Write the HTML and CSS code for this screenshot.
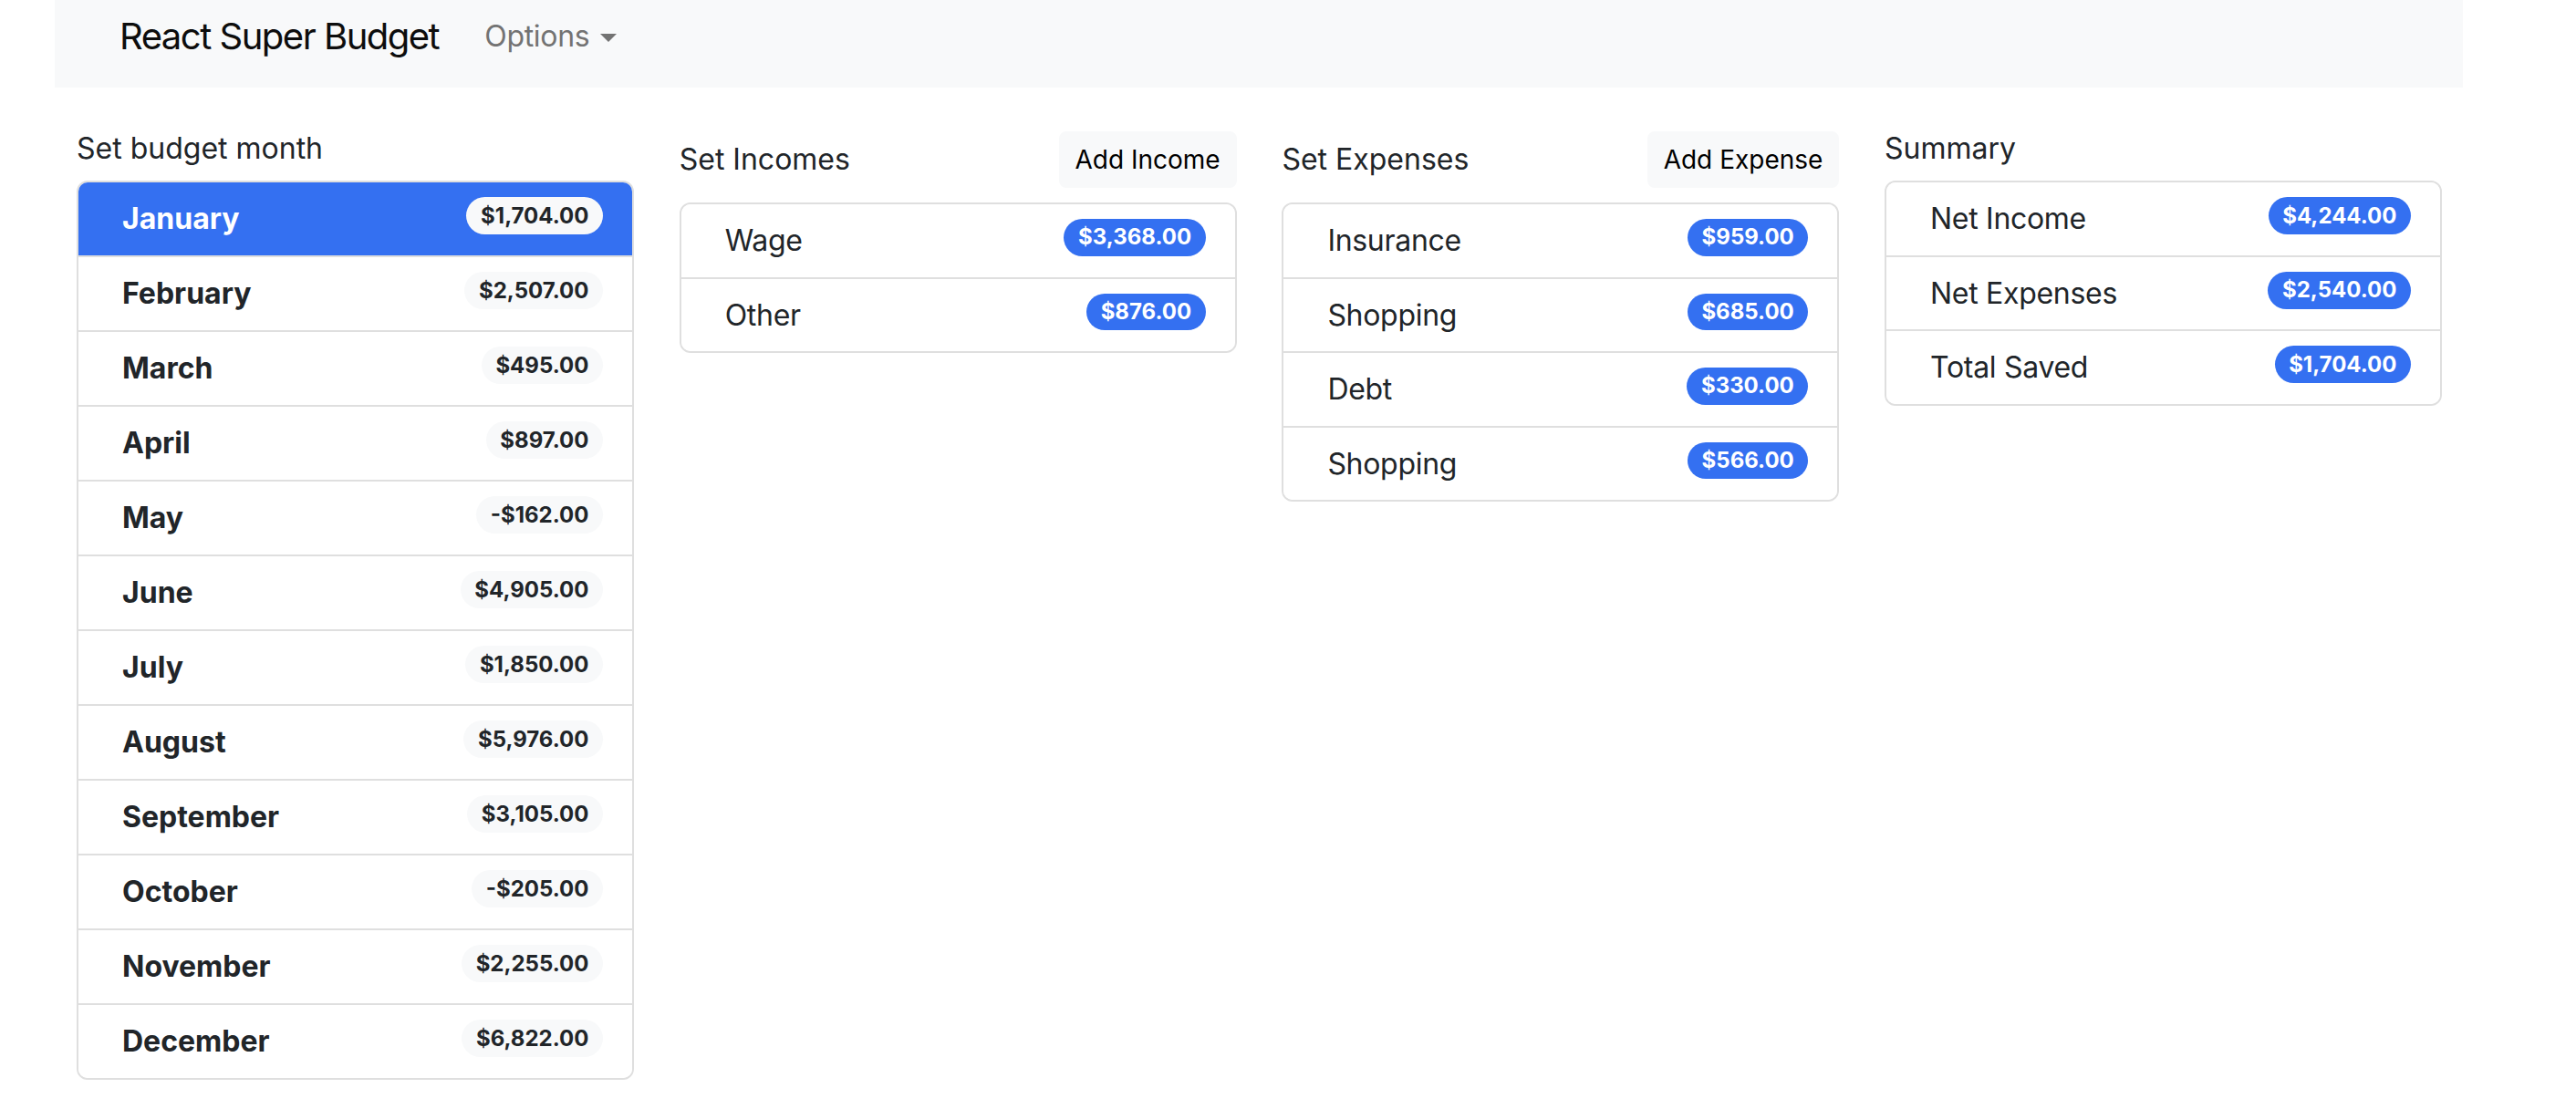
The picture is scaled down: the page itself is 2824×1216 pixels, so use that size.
FILE: index.html
```html
<!DOCTYPE html>
<html lang="en">
<head>
<meta charset="utf-8">
<title>React Super Budget</title>
<link rel="stylesheet" href="styles.css">
</head>
<body>
<nav class="navbar">
  <span class="brand">React Super Budget</span>
  <span class="nav-options">Options<svg class="caret" width="18" height="9" viewBox="0 0 18 9"><path d="M0 0 H18 L9 9 Z" fill="#737373"/></svg></span>
</nav>
<main class="main">
  <section class="col">
    <h2 class="heading">Set budget month</h2>
    <ul class="list">
      <li class="item active"><span class="label bold">January</span><span class="badge light">$1,704.00</span></li>
      <li class="item"><span class="label bold">February</span><span class="badge light">$2,507.00</span></li>
      <li class="item"><span class="label bold">March</span><span class="badge light">$495.00</span></li>
      <li class="item"><span class="label bold">April</span><span class="badge light">$897.00</span></li>
      <li class="item"><span class="label bold">May</span><span class="badge light">-$162.00</span></li>
      <li class="item"><span class="label bold">June</span><span class="badge light">$4,905.00</span></li>
      <li class="item"><span class="label bold">July</span><span class="badge light">$1,850.00</span></li>
      <li class="item"><span class="label bold">August</span><span class="badge light">$5,976.00</span></li>
      <li class="item"><span class="label bold">September</span><span class="badge light">$3,105.00</span></li>
      <li class="item"><span class="label bold">October</span><span class="badge light">-$205.00</span></li>
      <li class="item"><span class="label bold">November</span><span class="badge light">$2,255.00</span></li>
      <li class="item"><span class="label bold">December</span><span class="badge light">$6,822.00</span></li>
    </ul>
  </section>
  <section class="col">
    <div class="head-row">
      <h2 class="heading inline">Set Incomes</h2>
      <button class="btn">Add Income</button>
    </div>
    <ul class="list compact">
      <li class="item"><span class="label">Wage</span><span class="badge primary">$3,368.00</span></li>
      <li class="item"><span class="label">Other</span><span class="badge primary">$876.00</span></li>
    </ul>
  </section>
  <section class="col">
    <div class="head-row">
      <h2 class="heading inline">Set Expenses</h2>
      <button class="btn">Add Expense</button>
    </div>
    <ul class="list compact">
      <li class="item"><span class="label">Insurance</span><span class="badge primary">$959.00</span></li>
      <li class="item"><span class="label">Shopping</span><span class="badge primary">$685.00</span></li>
      <li class="item"><span class="label">Debt</span><span class="badge primary">$330.00</span></li>
      <li class="item"><span class="label">Shopping</span><span class="badge primary">$566.00</span></li>
    </ul>
  </section>
  <section class="col">
    <h2 class="heading">Summary</h2>
    <ul class="list compact">
      <li class="item"><span class="label">Net Income</span><span class="badge primary">$4,244.00</span></li>
      <li class="item"><span class="label">Net Expenses</span><span class="badge primary">$2,540.00</span></li>
      <li class="item"><span class="label">Total Saved</span><span class="badge primary">$1,704.00</span></li>
    </ul>
  </section>
</main>
</body>
</html>
```
FILE: styles.css
```css
* { box-sizing: border-box; }
html, body {
  margin: 0;
  padding: 0;
  background: #ffffff;
}
body {
  font-family: Inter, "Liberation Sans", Arial, sans-serif;
  color: #212529;
  font-size: 32px;
  line-height: 48px;
  width: 2824px;
  min-height: 1216px;
}
.navbar {
  margin-left: 60px;
  width: 2640px;
  height: 96px;
  background: #f8f9fa;
  display: flex;
  align-items: flex-start;
  padding: 16px 0 0 71px;
}
.brand {
  font-size: 40px;
  line-height: 48px;
  color: #0d0d0d;
  letter-spacing: -1.5px;
  margin-right: 50px;
}
.nav-options {
  font-size: 32px;
  line-height: 48px;
  color: #737373;
  letter-spacing: -0.3px;
  display: flex;
  align-items: center;
}
.caret {
  margin-left: 12px;
  margin-top: 2px;
}
.main {
  display: grid;
  grid-template-columns: repeat(4, 611px);
  column-gap: 49.7px;
  align-items: start;
  padding: 48px 0 0 84px;
}
.col {
  display: flex;
  flex-direction: column;
}
.heading {
  margin: 0 0 16px 0;
  font-size: 32px;
  font-weight: 400;
  line-height: 38.4px;
}
.heading.inline { margin: 0; }
.head-row {
  display: flex;
  justify-content: space-between;
  align-items: center;
  margin-bottom: 16px;
}
.btn {
  font-family: inherit;
  font-size: 28px;
  line-height: 42px;
  padding: 8px 16px;
  color: #000;
  background: #f8f9fa;
  border: 2px solid #f8f9fa;
  border-radius: 8px;
}
.list {
  list-style: none;
  margin: 0;
  padding: 0;
  border: 2px solid #dfdfdf;
  border-radius: 12px;
  overflow: hidden;
}
.item {
  display: flex;
  justify-content: space-between;
  align-items: flex-start;
  padding: 16px 32px;
  line-height: 48px;
  border-top: 2px solid #dfdfdf;
  background: #fff;
}
.item:first-child { border-top: 0; }
.compact .item { line-height: 47.5px; }
.compact .label { letter-spacing: -0.3px; }
.item.active {
  background: #3470f1;
  color: #fff;
  margin: -2px -2px 0 -2px;
  padding: 18px 34px 16px 34px;
}
.label {
  margin-left: 16px;
  margin-right: auto;
}
.bold { font-weight: 700; }
.badge {
  font-size: 24px;
  font-weight: 700;
  line-height: 1;
  padding: 8.4px 15.6px;
  border-radius: 100px;
  white-space: nowrap;
}
.badge.light {
  background: #f8f9fa;
  color: #212529;
}
.badge.primary {
  background: #3470f1;
  color: #fff;
}
```
